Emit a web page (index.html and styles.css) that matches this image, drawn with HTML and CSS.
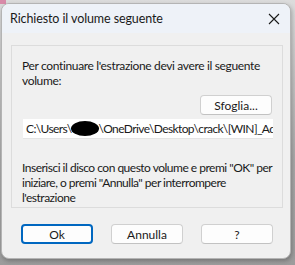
FILE: index.html
```html
<!DOCTYPE html>
<html lang="it">
<head>
  <meta charset="UTF-8">
  <title>Richiesto il volume seguente</title>
  <link rel="stylesheet" href="styles.css">
</head>
<body>
  <div class="behind"></div>
  <div class="dialog">
    <div class="titlebar">
      <span class="title">Richiesto il volume seguente</span>
      <svg class="close" width="12" height="12" viewBox="0 0 12 12">
        <path d="M1 1 L11 11 M11 1 L1 11" stroke="#1a1a1a" stroke-width="1.1" fill="none"/>
      </svg>
    </div>
    <div class="content">
      <div class="group">
        <p class="msg">Per continuare l'estrazione devi avere il seguente volume:</p>
        <div class="browse-row">
          <button class="btn">Sfoglia...</button>
        </div>
        <div class="path">C:\Users\<span class="blot"></span>\OneDrive\Desktop\crack\[WIN]_Adobe</div>
        <p class="msg hint">Inserisci il disco con questo volume e premi "OK" per iniziare, o premi "Annulla" per interrompere l'estrazione</p>
      </div>
      <div class="buttons">
        <button class="btn default">Ok</button>
        <button class="btn">Annulla</button>
        <button class="btn">?</button>
      </div>
    </div>
  </div>
</body>
</html>
```

FILE: styles.css
```css
body {
  margin: 0;
  width: 295px;
  height: 265px;
  overflow: hidden;
  background: linear-gradient(#dcdcdc, #a9a9a9 60%, #9c9c9c);
  font-family: Lato, "Noto Sans", sans-serif;
  font-size: 12px;
  color: #1a1a1a;
  position: relative;
}
.behind {
  position: absolute;
  left: 0;
  top: 0;
  width: 6px;
  height: 4px;
  background: #d88aa8;
}
.dialog {
  position: relative;
  margin: 3px 4px 0 1px;
  height: 254px;
  border: 1px solid #b4b4b4;
  border-radius: 8px;
  overflow: hidden;
  background: #f0f0f0;
  box-shadow: 1px 2px 4px rgba(0, 0, 0, 0.25);
}
.titlebar {
  height: 29px;
  background: #eef2f8;
  display: flex;
  align-items: center;
  justify-content: space-between;
  padding: 0 10px 0 8px;
}
.title {
  font-size: 12.5px;
  letter-spacing: -0.1px;
}
.content {
  padding: 12px 7px 0 9px;
}
.group {
  border: 1px solid #dcdcdc;
  height: 163px;
  padding: 12px 4px 0 10px;
  box-sizing: border-box;
}
.msg {
  margin: 0;
  line-height: 15px;
  letter-spacing: -0.35px;
}
.browse-row {
  display: flex;
  justify-content: flex-end;
  margin-top: 7px;
  padding-right: 6px;
}
.btn {
  font-family: inherit;
  font-size: 12px;
  color: #1a1a1a;
  width: 72px;
  height: 20px;
  padding: 0;
  background: #fdfdfd;
  border: 1px solid #d0d0d0;
  border-bottom-color: #c2c2c2;
  border-radius: 4px;
}
.path {
  margin-top: 4px;
  margin-left: 1px;
  height: 20px;
  width: 250px;
  box-sizing: border-box;
  background: #fff;
  padding: 0 3px;
  line-height: 20px;
  white-space: nowrap;
  overflow: hidden;
  letter-spacing: -0.6px;
  border-bottom: 1px solid #e4e4e4;
}
.blot {
  display: inline-block;
  width: 28px;
  height: 15px;
  background: #000;
  border-radius: 50%;
  vertical-align: -3px;
  margin: 0 0 0 -1px;
}
.hint {
  margin-top: 21px;
  letter-spacing: -0.5px;
}
.buttons {
  display: flex;
  gap: 18px;
  padding: 16px 0 0 10px;
}
.btn.default {
  border: 2px solid #0067c0;
}
```
